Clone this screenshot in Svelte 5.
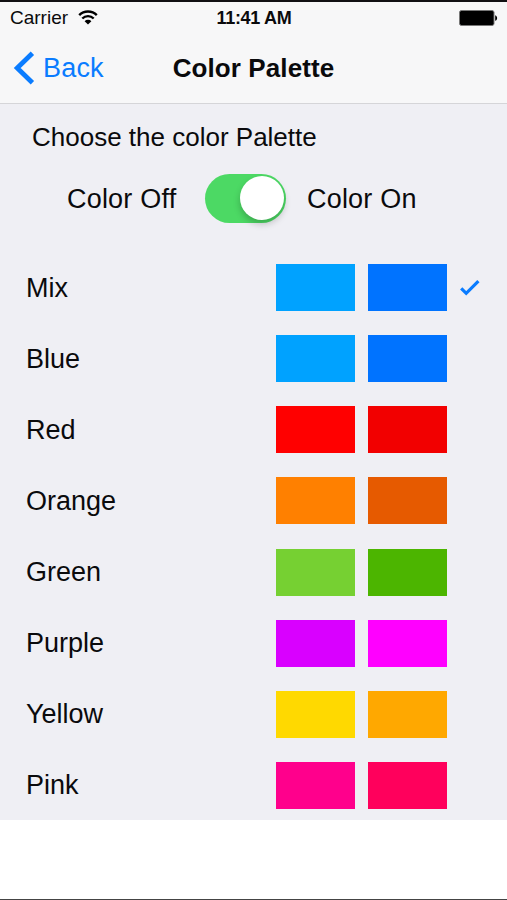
<script lang="ts">
	interface Palette {
		name: string;
		light: string;
		dark: string;
	}

	const palettes: Palette[] = [
		{ name: 'Mix', light: '#00a2ff', dark: '#0073ff' },
		{ name: 'Blue', light: '#00a2ff', dark: '#0073ff' },
		{ name: 'Red', light: '#ff0000', dark: '#f20000' },
		{ name: 'Orange', light: '#ff8000', dark: '#e65a00' },
		{ name: 'Green', light: '#76d032', dark: '#4cb500' },
		{ name: 'Purple', light: '#d900ff', dark: '#ff00ff' },
		{ name: 'Yellow', light: '#ffd900', dark: '#ffa800' },
		{ name: 'Pink', light: '#ff008c', dark: '#ff005c' }
	];

	let selected = $state('Mix');
	let colorOn = $state(true);
</script>

<div class="screen">
	<header>
		<div class="status-bar">
			<div class="carrier">
				<span>Carrier</span>
				<svg class="wifi" width="20" height="15" viewBox="0 0 20 15" aria-hidden="true">
					<path d="M1.2 5.2a12.4 12.4 0 0 1 17.6 0" />
					<path d="M4.3 8.5a8.1 8.1 0 0 1 11.4 0" />
					<path class="dot" d="M10 14.6 6.6 11.2a4.8 4.8 0 0 1 6.8 0z" />
				</svg>
			</div>
			<span class="time">11:41 AM</span>
			<div class="battery">
				<svg width="39" height="16" viewBox="0 0 39 16" aria-hidden="true">
					<rect x="0.5" y="0.5" width="34.5" height="15" rx="2" fill="#000" stroke="#777" />
					<path d="M36.2 5.2c2.6.9 2.6 4.7 0 5.6z" />
				</svg>
			</div>
		</div>
		<nav>
			<button type="button" class="back">
				<svg width="22" height="34" viewBox="0 0 22 34" aria-hidden="true">
					<path d="M19.4 2.2 4.2 17l15.2 14.8" />
				</svg>
				<span>Back</span>
			</button>
			<h1>Color Palette</h1>
		</nav>
	</header>

	<main>
		<p class="prompt">Choose the color Palette</p>
		<div class="toggle-row">
			<span class="off-label">Color Off</span>
			<button
				type="button"
				class="switch"
				class:on={colorOn}
				role="switch"
				aria-checked={colorOn}
				aria-label="Color"
				onclick={() => (colorOn = !colorOn)}
			>
				<span class="knob"></span>
			</button>
			<span class="on-label">Color On</span>
		</div>

		<div class="palettes">
			{#each palettes as palette}
				<button type="button" class="palette" onclick={() => (selected = palette.name)}>
					<span class="name">{palette.name}</span>
					<span class="swatch" style:background={palette.light}></span>
					<span class="swatch" style:background={palette.dark}></span>
					<span class="mark">
						{#if selected === palette.name}
							<svg width="22" height="18" viewBox="0 0 22 18" aria-hidden="true">
								<path d="M2.2 9.4 7.2 14.3 19.4 2.2" />
							</svg>
						{/if}
					</span>
				</button>
			{/each}
		</div>
	</main>
</div>

<style>
	:global(body) {
		margin: 0;
		background: #fff;
	}

	.screen {
		box-sizing: border-box;
		height: 900px;
		border-top: 2px solid #111013;
		border-bottom: 1px solid #444;
		font-family: 'Liberation Sans', Arial, sans-serif;
		font-size: 26px;
		line-height: 30px;
		color: #0a0a0c;
	}

	button {
		padding: 0;
		border: 0;
		background: none;
		font: inherit;
		color: inherit;
		text-align: left;
		cursor: pointer;
	}

	header {
		box-sizing: border-box;
		height: 102px;
		background: #f7f7f8;
		border-bottom: 1px solid #d5d5d8;
	}

	.status-bar {
		display: grid;
		grid-template-columns: 1fr auto 1fr;
		align-items: center;
		height: 32px;
		padding: 0 9px 0 10px;
		font-size: 19px;
		line-height: 22px;
	}

	.carrier {
		display: flex;
		align-items: center;
		gap: 10px;
	}

	.wifi {
		margin-bottom: 2px;
		fill: none;
		stroke: #000;
		stroke-width: 2.4;
	}

	.wifi .dot {
		fill: #000;
		stroke: none;
	}

	.time {
		font-size: 18px;
		font-weight: bold;
		letter-spacing: -0.3px;
	}

	.battery {
		display: flex;
		justify-content: flex-end;
	}

	nav {
		display: grid;
		grid-template-columns: 1fr auto 1fr;
		align-items: center;
		height: 68px;
		padding: 0 13px;
	}

	.back {
		display: flex;
		align-items: center;
		gap: 8px;
		font-size: 27px;
		letter-spacing: 0.2px;
		color: #0a7cff;
	}

	.back path {
		fill: none;
		stroke: currentColor;
		stroke-width: 4.8;
	}

	h1 {
		margin: 0;
		font-size: 26px;
		line-height: 30px;
		letter-spacing: 0.1px;
	}

	main {
		box-sizing: border-box;
		height: 716px;
		padding-top: 18px;
		background: #efeff4;
	}

	.prompt {
		margin: 0;
		padding-left: 32px;
	}

	.toggle-row {
		display: flex;
		align-items: center;
		height: 49px;
		margin-top: 22px;
		padding-left: 67px;
		font-size: 27px;
		letter-spacing: 0.2px;
	}

	.off-label {
		width: 138px;
	}

	.switch {
		display: flex;
		box-sizing: border-box;
		width: 81px;
		height: 49px;
		padding: 2px;
		border-radius: 25px;
		background: #d8d8dc;
	}

	.switch.on {
		justify-content: flex-end;
		background: #4cd964;
	}

	.knob {
		width: 44px;
		height: 44px;
		border-radius: 50%;
		background: #fff;
		box-shadow: 0 4px 7px rgba(0, 0, 0, 0.22);
	}

	.on-label {
		margin-left: 21px;
	}

	.palettes {
		margin-top: 29px;
	}

	.palette {
		display: flex;
		align-items: center;
		width: 100%;
		height: 71.14px;
		padding-left: 26px;
	}

	.name {
		width: 250px;
		font-size: 27px;
	}

	.swatch {
		width: 79px;
		height: 47px;
		margin-right: 13px;
	}

	.mark {
		display: flex;
		margin-left: -1px;
	}

	.mark path {
		fill: none;
		stroke: #0a7cff;
		stroke-width: 3.2;
	}
</style>
